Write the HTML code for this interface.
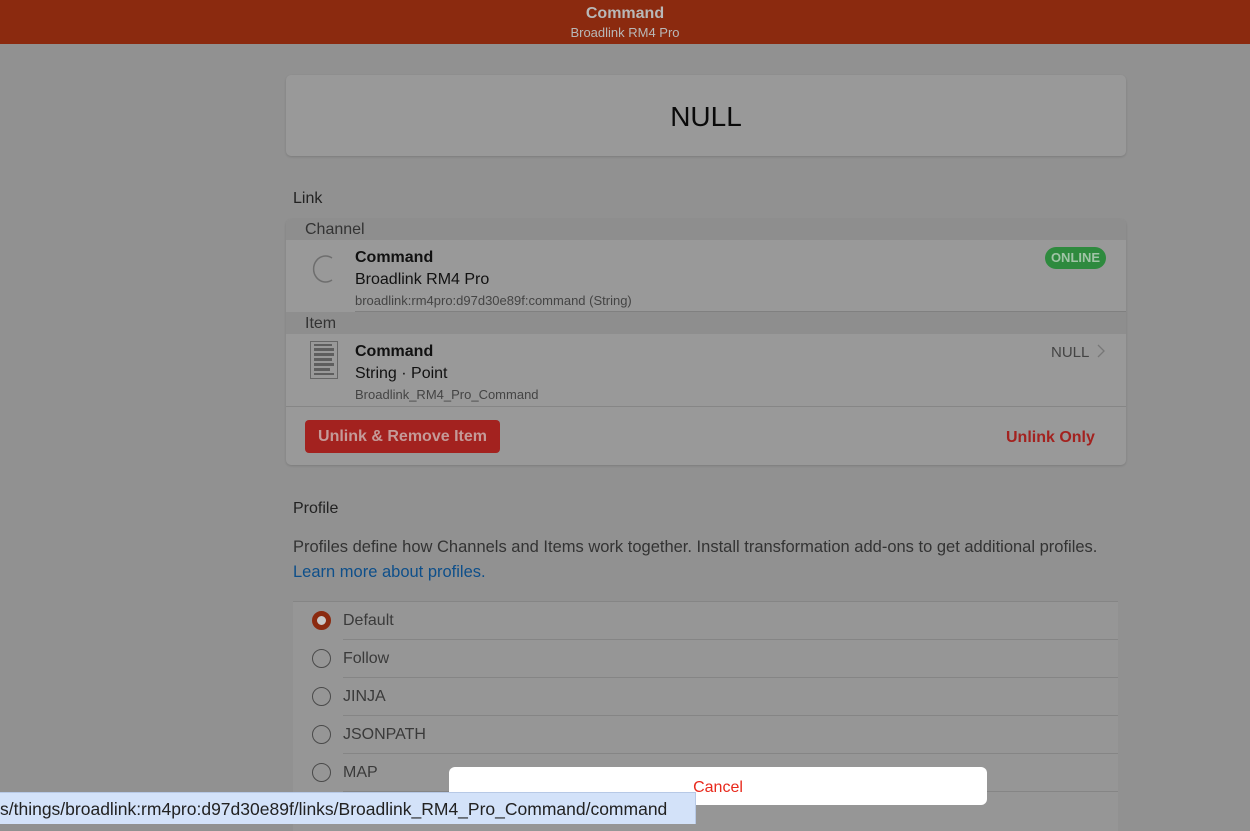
<!DOCTYPE html>
<html><head><style>
*{box-sizing:border-box;margin:0;padding:0}
body{width:1250px;height:824px;background:#919191;font-family:"Liberation Sans",sans-serif;position:relative;overflow:hidden;color:#111}
.abs{position:absolute}
.hdr{left:0;top:0;width:1250px;height:44px;background:#8b2a0f;text-align:center;color:#b8b8b8}
.card{background:#999;border-radius:5px;box-shadow:0 1px 2px rgba(0,0,0,.15)}
.sec{background:#8e8e8e;color:#333;font-size:16px;padding-left:19px;height:22px;line-height:23px}
.t1{font-size:16px;font-weight:bold;color:#111}
.t2{font-size:16px;color:#111}
.t3{font-size:13px;color:#444}
.row{height:38px;border-bottom:1px solid #858585;margin-left:50px;position:relative;font-size:16px;color:#3a3a3a;line-height:38px}
.radio{position:absolute;left:-31px;top:9px;width:19px;height:19px;border:1.5px solid #4a4a4a;border-radius:50%}
</style></head><body>
<div class="abs hdr"><div style="font-size:16px;font-weight:bold;padding-top:5px">Command</div><div style="font-size:13px;margin-top:2px">Broadlink RM4 Pro</div></div>
<div class="abs card" style="left:286px;top:75px;width:840px;height:81px;text-align:center;font-size:28px;line-height:83px;color:#0a0a0a">NULL</div>
<div class="abs" style="left:293px;top:190px;font-size:16px;color:#222">Link</div>
<div class="abs card" style="left:286px;top:219px;width:840px;height:246px;overflow:hidden">
 <div class="sec" style="height:21px;line-height:21px">Channel</div>
 <div style="position:relative;height:72px">
  <svg class="abs" style="left:26px;top:14px" width="26" height="30"><path d="M20 4 A12 13 0 1 0 20 26" fill="none" stroke="#6e6e6e" stroke-width="1.5"/></svg>
  <div class="abs t1" style="left:69px;top:9px">Command</div>
  <div class="abs t2" style="left:69px;top:31px">Broadlink RM4 Pro</div>
  <div class="abs t3" style="left:69px;top:53px">broadlink:rm4pro:d97d30e89f:command (String)</div>
  <div class="abs" style="left:759px;top:7px;width:61px;height:22px;border-radius:11px;background:#2e8a3e;color:#a0c4a6;font-size:13px;font-weight:bold;text-align:center;line-height:22px">ONLINE</div>
  <div class="abs" style="left:69px;top:71px;width:771px;border-top:1px solid #808080"></div>
 </div>
 <div class="sec">Item</div>
 <div style="position:relative;height:73px;border-bottom:1px solid #868686">
  <svg class="abs" style="left:24px;top:7px" width="28" height="38"><rect x="0.5" y="0.5" width="27" height="37" fill="none" stroke="#666"/><g fill="#5e5e5e"><rect x="4" y="3" width="18" height="2"/><rect x="4" y="7" width="20" height="3"/><rect x="4" y="12" width="20" height="3"/><rect x="4" y="17" width="18" height="3"/><rect x="4" y="22" width="20" height="3"/><rect x="4" y="27" width="16" height="3"/><rect x="4" y="32" width="20" height="2"/></g></svg>
  <div class="abs t1" style="left:69px;top:9px">Command</div>
  <div class="abs t2" style="left:69px;top:31px">String · Point</div>
  <div class="abs t3" style="left:69px;top:53px">Broadlink_RM4_Pro_Command</div>
  <div class="abs" style="left:765px;top:10px;font-size:15px;color:#444">NULL</div>
  <svg class="abs" style="left:810px;top:10px" width="10" height="14"><path d="M2 1 L8 7 L2 13" fill="none" stroke="#777" stroke-width="1.3"/></svg>
 </div>
 <div class="abs" style="left:19px;top:201px;width:195px;height:33px;background:#a3221f;border-radius:4px;color:#c49a98;font-weight:bold;font-size:16px;text-align:center;line-height:34px">Unlink &amp; Remove Item</div>
 <div class="abs" style="left:720px;top:210px;color:#a3221f;font-weight:bold;font-size:16px">Unlink Only</div>
</div>
<div class="abs" style="left:293px;top:500px;font-size:16px;color:#222">Profile</div>
<div class="abs" style="left:293px;top:538px;font-size:16.5px;color:#333">Profiles define how Channels and Items work together. Install transformation add-ons to get additional profiles.</div>
<div class="abs" style="left:293px;top:563px;font-size:16.5px;color:#0e4f8a">Learn more about profiles.</div>
<div class="abs" style="left:293px;top:601px;width:825px;height:230px;background:#969696;border-top:1px solid #858585">
 <div class="row"><span class="radio" style="border:5.5px solid #8b2a0f;background:#c8c8c8"></span>Default</div>
 <div class="row"><span class="radio"></span>Follow</div>
 <div class="row"><span class="radio"></span>JINJA</div>
 <div class="row"><span class="radio"></span>JSONPATH</div>
 <div class="row"><span class="radio"></span>MAP</div>
</div>
<div class="abs" style="left:449px;top:767px;width:538px;height:38px;background:#fff;border-radius:6px;text-align:center;line-height:41px;color:#e8291c;font-size:16px">Cancel</div>
<div class="abs" style="left:0;top:792px;width:696px;height:32px;background:#d3e2f9;border-top:1px solid #b7c9e6;border-right:1px solid #b7c9e6;font-size:17.5px;line-height:32px;color:#222;white-space:nowrap;overflow:hidden">s/things/broadlink:rm4pro:d97d30e89f/links/Broadlink_RM4_Pro_Command/command</div>
</body></html>
